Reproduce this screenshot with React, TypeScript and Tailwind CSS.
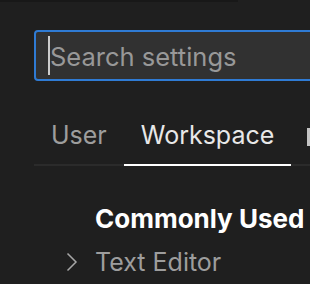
import React from 'react';

const font = { fontFamily: 'Inter, "Noto Sans", sans-serif' };

export default function App() {
  return (
    <div
      className="w-[310px] h-[284px] bg-[#1f1f1f] overflow-hidden flex flex-col"
      style={font}
    >
      {/* title strip */}
      <div className="h-[2px] w-[238px] bg-[#181818] shrink-0" />

      {/* search */}
      <div className="mt-[28px] ml-[34px] shrink-0">
        <div className="w-[320px] h-[51px] rounded-[4px] border-2 border-[#2f7bd4] bg-[#313131] flex items-center pl-[12px]">
          <span className="w-[2px] h-[39px] bg-[#cccccc] shrink-0" />
          <span className="text-[25.5px] text-[#989898] leading-none whitespace-nowrap pt-[2px]">Search settings</span>
        </div>
      </div>

      {/* tabs */}
      <div className="mt-[39px] ml-[34px] flex items-end border-b-2 border-[#2b2b2b] shrink-0 w-[320px]">
        <div className="px-[17px] pb-[14px] text-[25px] leading-[30px] text-[#9d9d9d] whitespace-nowrap border-b-2 border-transparent -mb-[2px]">
          User
        </div>
        <div className="px-[17px] pb-[14px] text-[25px] leading-[30px] text-[#e8e8e8] whitespace-nowrap border-b-2 border-white -mb-[2px]">
          Workspace
        </div>
        <div className="ml-[16px] mb-[18px] w-[14px] h-[18px] bg-[#c4c4c4] shrink-0" />
      </div>

      {/* tree */}
      <div className="mt-[38px] pl-[95px] text-[26px] leading-[30px] font-bold text-white whitespace-nowrap">
        Commonly Used
      </div>
      <div className="mt-[13px] pl-[64px] flex items-center gap-[15px] whitespace-nowrap">
        <svg width="16" height="20" viewBox="0 0 16 20" fill="none" className="shrink-0">
          <path d="M3.5 1.5 L12 10 L3.5 18.5" stroke="#a6a6a6" strokeWidth="1.5" />
        </svg>
        <span className="text-[25px] leading-[30px] text-[#9d9d9d]">Text Editor</span>
      </div>
    </div>
  );
}
